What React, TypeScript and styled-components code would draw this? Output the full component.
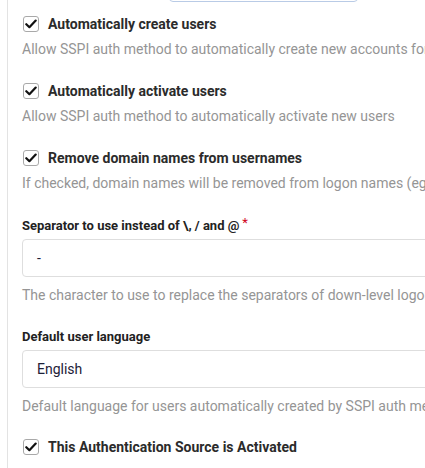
import React, { FC, ReactNode } from 'react';
import styled, { createGlobalStyle } from 'styled-components';

const GlobalStyle = createGlobalStyle`
  html, body {
    margin: 0;
    padding: 0;
    background: #fff;
    overflow: hidden;
  }
  body {
    font-family: Roboto, "Liberation Sans", Arial, sans-serif;
    -webkit-font-smoothing: antialiased;
  }
`;

const Page = styled.div`
  display: flex;
  flex-direction: column;
  margin-left: 7px;
  border-left: 1px solid #e3e3e3;
  min-height: 468px;
  padding-left: 14px;
  width: 600px;
`;

const PrevFieldEdge = styled.div`
  box-sizing: border-box;
  margin-left: 147px;
  margin-top: -29px;
  width: 189px;
  height: 31px;
  border: 1px solid #b9cbe6;
  border-radius: 0 0 4px 4px;
`;

const Section = styled.div<{ $space: number }>`
  display: flex;
  flex-direction: column;
  margin-top: ${({ $space }) => $space}px;
`;

const CheckRow = styled.label`
  display: flex;
  align-items: center;
  gap: 9px;
  height: 24px;
  font-size: 14px;
  font-weight: 700;
  color: #2b2b2b;
`;

const Box = styled.span`
  box-sizing: border-box;
  width: 16px;
  height: 16px;
  margin-left: 1px;
  border: 1px solid #a9a9a9;
  border-radius: 3px;
  background: #fff;
  display: flex;
  align-items: center;
  justify-content: center;
`;

const Help = styled.div<{ $after: number }>`
  font-size: 14px;
  line-height: 20px;
  color: #959595;
  white-space: nowrap;
  margin-top: ${({ $after }) => $after}px;
`;

const FieldLabel = styled.div`
  font-size: 13px;
  font-weight: 700;
  line-height: 20px;
  color: #222;
  margin-bottom: 3px;
  white-space: nowrap;
`;

const Required = styled.span`
  color: #d0021b;
  margin-left: 3px;
  font-weight: 400;
  position: relative;
  top: -3px;
`;

const Input = styled.div`
  box-sizing: border-box;
  height: 38px;
  border: 1px solid #dedede;
  border-radius: 4px;
  padding: 0 14px;
  display: flex;
  align-items: center;
  font-size: 14px;
  color: #1d2138;
`;

const CheckField: FC<{ label: string; help?: string; space: number }> = ({ label, help, space }) => (
  <Section $space={space}>
    <CheckRow>
      <Box>
        <svg width="12" height="10" viewBox="0 0 12 10">
          <path d="M1.3 5.2 L4.4 8.2 L10.7 1.6" fill="none" stroke="#111" strokeWidth="2.2" strokeLinecap="round" strokeLinejoin="round" />
        </svg>
      </Box>
      {label}
    </CheckRow>
    {help && <Help $after={3}>{help}</Help>}
  </Section>
);

const TextField: FC<{ label: ReactNode; value: string; help: string; space: number }> = ({ label, value, help, space }) => (
  <Section $space={space}>
    <FieldLabel>{label}</FieldLabel>
    <Input>{value}</Input>
    <Help $after={8}>{help}</Help>
  </Section>
);

const App: FC = () => (
  <>
    <GlobalStyle />
    <Page>
      <PrevFieldEdge />
      <CheckField
        space={10}
        label="Automatically create users"
        help="Allow SSPI auth method to automatically create new accounts for users"
      />
      <CheckField
        space={20}
        label="Automatically activate users"
        help="Allow SSPI auth method to automatically activate new users"
      />
      <CheckField
        space={20}
        label="Remove domain names from usernames"
        help={'If checked, domain names will be removed from logon names (eg. "DOMAIN\\user" and "user@example.org" both will become "user")'}
      />
      <TextField
        space={23}
        label={<>Separator to use instead of \, / and @<Required>*</Required></>}
        value="-"
        help="The character to use to replace the separators of down-level logon names"
      />
      <TextField
        space={22}
        label="Default user language"
        value="English"
        help="Default language for users automatically created by SSPI auth method"
      />
      <CheckField space={19} label="This Authentication Source is Activated" />
    </Page>
  </>
);

export default App;
